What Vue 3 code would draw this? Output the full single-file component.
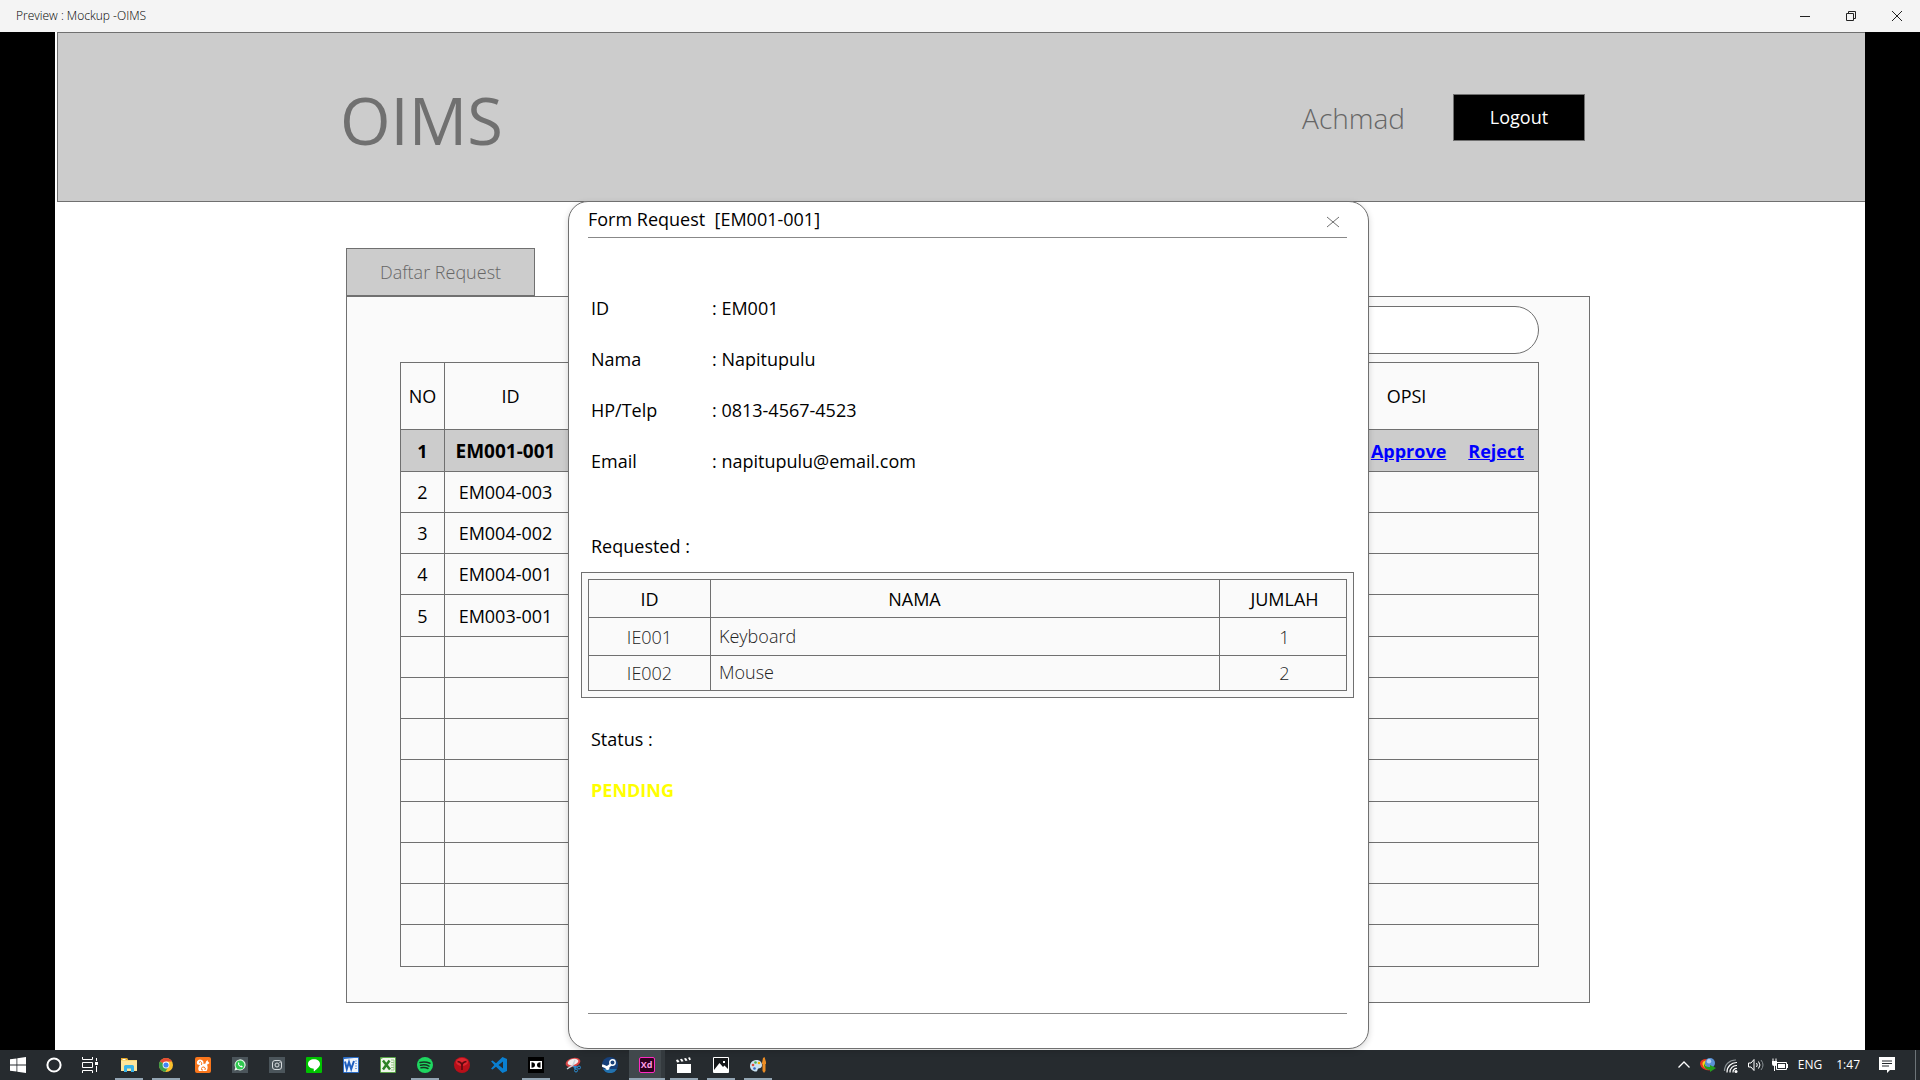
<script setup>
const fields = [
  { label: 'ID', value: 'EM001' },
  { label: 'Nama', value: 'Napitupulu' },
  { label: 'HP/Telp', value: '0813-4567-4523' },
  { label: 'Email', value: 'napitupulu@email.com' },
]

const items = [
  { id: 'IE001', name: 'Keyboard', qty: 1 },
  { id: 'IE002', name: 'Mouse', qty: 2 },
]

const ids = ['EM001-001', 'EM004-003', 'EM004-002', 'EM004-001', 'EM003-001']
const rows = Array.from({ length: 13 }, (_, i) => ({
  no: i < ids.length ? i + 1 : '',
  id: ids[i] || '',
  selected: i === 0,
}))
</script>

<template>
  <div class="window">
    <div class="titlebar">
      <span class="title">Preview : Mockup -OIMS</span>
      <div class="controls">
        <button type="button" aria-label="Minimize">
          <svg width="12" height="12" viewBox="0 0 12 12"><path d="M1 6.5h10" stroke="#222" fill="none" /></svg>
        </button>
        <button type="button" aria-label="Restore">
          <svg width="12" height="12" viewBox="0 0 12 12"><path d="M1.500 3.500h7v7h-7zM3.500 3.500v-2h7v7h-2" stroke="#222" fill="none" /></svg>
        </button>
        <button type="button" aria-label="Close">
          <svg width="12" height="12" viewBox="0 0 12 12"><path d="M1 1l10 10M11 1L1 11" stroke="#222" fill="none" /></svg>
        </button>
      </div>
    </div>

    <div class="stage">
      <div class="artboard">
        <header class="header">
          <h1 class="logo">OIMS</h1>
          <div class="account">
            <span class="user">Achmad</span>
            <button type="button" class="logout">Logout</button>
          </div>
        </header>

        <main class="content">
          <button type="button" class="tab">Daftar Request</button>
          <section class="panel">
            <input class="search" type="text" aria-label="Cari request" />
            <table class="requests">
              <colgroup>
                <col class="c-no" />
                <col class="c-id" />
                <col />
                <col class="c-opsi" />
              </colgroup>
              <thead>
                <tr><th>NO</th><th>ID</th><th></th><th>OPSI</th></tr>
              </thead>
              <tbody>
                <tr v-for="(row, i) in rows" :key="i" :class="{ selected: row.selected }">
                  <td>{{ row.no }}</td>
                  <td class="id">{{ row.id }}</td>
                  <td></td>
                  <td class="actions">
                    <template v-if="row.selected">
                      <a href="#">Approve</a>
                      <a href="#">Reject</a>
                    </template>
                  </td>
                </tr>
              </tbody>
            </table>
          </section>
        </main>

        <div class="modal" role="dialog" aria-labelledby="modal-title">
          <div class="modal-head">
            <h2 id="modal-title">Form Request&nbsp; [EM001-001]</h2>
            <button type="button" class="close" aria-label="Close form">
              <svg width="14" height="12" viewBox="0 0 14 12"><path d="M1 1l12 10M13 1L1 11" stroke="#707070" fill="none" /></svg>
            </button>
          </div>
          <dl class="fields">
            <div v-for="f in fields" :key="f.label" class="field">
              <dt>{{ f.label }}</dt>
              <dd>: {{ f.value }}</dd>
            </div>
          </dl>
          <p class="label">Requested :</p>
          <div class="items-box">
            <table class="items">
              <colgroup>
                <col class="i-id" />
                <col />
                <col class="i-qty" />
              </colgroup>
              <thead>
                <tr><th>ID</th><th class="name-head">NAMA</th><th class="qty">JUMLAH</th></tr>
              </thead>
              <tbody>
                <tr v-for="it in items" :key="it.id">
                  <td>{{ it.id }}</td>
                  <td class="name">{{ it.name }}</td>
                  <td class="qty">{{ it.qty }}</td>
                </tr>
              </tbody>
            </table>
          </div>
          <p class="label status-label">Status :</p>
          <p class="label status">PENDING</p>
          <div class="modal-foot"></div>
        </div>
      </div>
    </div>

    <footer class="taskbar">
      <div class="system">
        <button type="button" aria-label="Start">
          <svg width="16" height="16" viewBox="0 0 16 16" fill="#fff"><path d="M0 2.300L6.500 1.400v6.200H0zM7.300 1.300L16 0v7.600H7.300zM0 8.400h6.500v6.200L0 13.700zM7.300 8.400H16V16l-8.700-1.300z" /></svg>
        </button>
        <button type="button" aria-label="Cortana">
          <svg width="16" height="16" viewBox="0 0 16 16"><circle cx="8" cy="8" r="6.600" fill="none" stroke="#fff" stroke-width="2" /></svg>
        </button>
        <button type="button" aria-label="Task view">
          <svg width="16" height="16" viewBox="0 0 16 16" fill="none" stroke="#fff"><path d="M.5 0v2.500h10V0M.5 5.500h10v5H.5zM.5 16v-2.500h10V16M14.500 1v3M14.500 9v6" /><path d="M13 5h3v3h-3z" fill="#fff" stroke="none" /></svg>
        </button>
      </div>
      <div class="apps">
        <button type="button" class="open" aria-label="File Explorer">
          <svg width="16" height="16" viewBox="0 0 16 16"><path d="M0 1h6l1 2h9v11H0z" fill="#f8d775" /><path d="M0 1h6l1 2H0z" fill="#e5a92a" /><path d="M1.500 2h3v1h-3z" fill="#fff" /><path d="M0 4h16v10H0z" fill="#ffe59a" /><path d="M3 15V9.500Q3 8 4.500 8h7Q13 8 13 9.500V15h-3v-3.500H6V15z" fill="#39b3e8" /></svg>
        </button>
        <button type="button" class="open" aria-label="Chrome">
          <svg width="16" height="16" viewBox="0 0 16 16"><circle cx="8" cy="8" r="7" fill="#fbc02d" /><path d="M8 8L1.900 4.500A7 7 0 0 1 14.100 4.500H8z" fill="#e64a35" /><path d="M8 8L1.900 4.500A7 7 0 0 0 7.300 15L10.500 9.500z" fill="#3b9e4b" /><circle cx="8" cy="8" r="3.400" fill="#fff" /><circle cx="8" cy="8" r="2.600" fill="#4285f4" /></svg>
        </button>
        <button type="button" aria-label="UC Browser">
          <svg width="16" height="16" viewBox="0 0 16 16"><rect width="16" height="16" rx="2" fill="#f9761c" /><path d="M4 14q-2-3 1-6Q1 8 2 4.500 3.500 1.500 7 3q2 1 1.500 4l2-.5Q10.500 4 12.500 3l.3 1.200L14.500 6l-1.500 1.200-1 .3Q13.500 11 11.500 14z" fill="#fff" /><path d="M4 5.500q1.500-2 2.500 0T6 8M10 13q1-2.500-1-3t-2.500 1.500T8 13" fill="none" stroke="#f9761c" /></svg>
        </button>
        <button type="button" aria-label="WhatsApp">
          <svg width="16" height="16" viewBox="0 0 16 16"><path d="M0 0h16v16H0z" fill="#4b555b" /><path d="M2.500 13.500l.8-3a5.500 5.500 0 1 1 2.200 2.200z" fill="#e8fbec" /><circle cx="8" cy="8" r="4.500" fill="#2fc84f" /><path d="M6 5.500q-.5 4 4 5l.8-1.200-1.600-.8-.7.5L7 7.500l.4-.8L7 5.400z" fill="#fff" /></svg>
        </button>
        <button type="button" aria-label="Instagram">
          <svg width="16" height="16" viewBox="0 0 16 16"><path d="M0 0h16v16H0z" fill="#4b555b" /><rect x="3.500" y="3.500" width="9" height="9" rx="2.500" fill="none" stroke="#d8dcde" /><circle cx="8" cy="8" r="2" fill="none" stroke="#d8dcde" /><path d="M10.500 5h1v1h-1z" fill="#d8dcde" /></svg>
        </button>
        <button type="button" aria-label="LINE">
          <svg width="16" height="16" viewBox="0 0 16 16"><rect width="16" height="16" rx="1" fill="#00c300" /><path d="M8 2.300c3.400 0 6 2 6 4.700 0 2.800-3 4.700-5.600 7.200-.6.500-.8-.2-.6-2.500C4.700 11.700 2 9.700 2 7s2.600-4.700 6-4.700z" fill="#fff" /></svg>
        </button>
        <button type="button" aria-label="Word">
          <svg width="16" height="16" viewBox="0 0 16 16"><rect width="16" height="16" rx="1" fill="#2b6cc4" /><path d="M1 2l10-1h4v14H1z" fill="#eef4fc" /><path d="M12 4h2M12 6.500h2M12 9h2M12 11.500h2" stroke="#7ba2dc" /><path d="M2 4.500l1.800 7.500L6 5l2.200 7L11 4" fill="none" stroke="#1f5fc0" stroke-width="2" /></svg>
        </button>
        <button type="button" aria-label="Excel">
          <svg width="16" height="16" viewBox="0 0 16 16"><rect width="16" height="16" rx="1" fill="#58a446" /><path d="M1 2l2-1h12v14H1z" fill="#eff8ea" /><path d="M11 3h3v10h-3M11 5.500h3M11 8h3M11 10.500h3" fill="none" stroke="#9bc98a" /><path d="M3 3.500l7 9M9.500 3.500L3 12.500" stroke="#2e8426" stroke-width="2.500" /></svg>
        </button>
        <button type="button" class="open" aria-label="Spotify">
          <svg width="16" height="16" viewBox="0 0 16 16"><circle cx="8" cy="8" r="8" fill="#1ed760" /><path d="M3 5.500q5-1.500 10 .8M3.500 8.300q4.500-1.200 8.500.8M4 10.800q4-1 7 .7" fill="none" stroke="#173522" stroke-width="1.500" stroke-linecap="round" /></svg>
        </button>
        <button type="button" aria-label="Yandex">
          <svg width="16" height="16" viewBox="0 0 16 16"><circle cx="8" cy="8" r="8" fill="#b80f19" /><ellipse cx="8" cy="5" rx="6" ry="4" fill="#dd2730" /><path d="M3.500 4.500Q8 5 8 9q0-4 4.500-4.500M8 7v6" fill="none" stroke="#5b0a10" stroke-width="1.600" /></svg>
        </button>
        <button type="button" aria-label="Visual Studio Code">
          <svg width="16" height="16" viewBox="0 0 16 16"><path d="M11.500 0L16 2v12l-4.500 2L5 9.800 1.500 12.500 0 11.700 3.300 8 0 4.300l1.500-.8L5 6.200zM12 4.500L7.500 8l4.500 3.500z" fill="#0a7fd0" fill-rule="evenodd" /></svg>
        </button>
        <button type="button" class="open" aria-label="Dolby">
          <svg width="16" height="16" viewBox="0 0 16 16"><path d="M0 0h16v16H0z" fill="#000" /><path d="M2 4h12v8H2z" fill="#fff" /><path d="M3.500 5.200q3.500 0 3.500 2.800t-3.500 2.800zM12.500 5.200q-3.500 0-3.500 2.800t3.500 2.800z" fill="#000" /></svg>
        </button>
        <button type="button" aria-label="Snipping Tool">
          <svg width="16" height="16" viewBox="0 0 16 16"><ellipse cx="8" cy="5.500" rx="7.500" ry="4.500" fill="#d94545" transform="rotate(-15 8 5.500)" /><ellipse cx="8" cy="5" rx="5.500" ry="3" fill="#f2efef" transform="rotate(-15 8 5)" /><path d="M2 12l6-4 2-5" fill="none" stroke="#ccd3d8" stroke-width="1.500" /><circle cx="14" cy="10.500" r="1.500" fill="none" stroke="#2d8fd5" /><circle cx="11" cy="13.500" r="1.500" fill="none" stroke="#2d8fd5" /><path d="M8 9.500l4.500.5M10 9v3" stroke="#2d8fd5" stroke-width="1.500" /></svg>
        </button>
        <button type="button" aria-label="Steam">
          <svg width="16" height="16" viewBox="0 0 16 16"><circle cx="8" cy="8" r="8" fill="#17407a" /><path d="M1 12A8 8 0 0 0 15 12z" fill="#2372ae" /><circle cx="10.500" cy="5.500" r="2.700" fill="none" stroke="#fff" stroke-width="1.400" /><path d="M0 8.500l5 2 4-3" fill="none" stroke="#fff" stroke-width="2.500" /><circle cx="5.500" cy="11" r="2" fill="#fff" /></svg>
        </button>
        <button type="button" class="open active" aria-label="Adobe XD">
          <span class="xd">Xd</span>
        </button>
        <button type="button" class="open" aria-label="Movies">
          <svg width="16" height="16" viewBox="0 0 16 16" fill="#fff"><path d="M1 7h14v9H1z" /><path d="M0 3l2-.5 1.500 2.500-2.500.5zM4 2.200l2-.4L7.500 4.300l-2 .4zM8 1.400l2-.4 1.500 2.500-2 .4zM12 .7l2-.5.800 2.600-1.500.4z" /></svg>
        </button>
        <button type="button" class="open" aria-label="Photos">
          <svg width="16" height="16" viewBox="0 0 16 16"><path d="M.5.5h15v15H.5z" fill="#15181a" stroke="#fff" /><path d="M1 13l5.500-7 3.500 4 1.500-1.500L15 12v3H1z" fill="#fff" /><path d="M10 4h2v2h-2z" fill="#fff" /></svg>
        </button>
        <button type="button" class="open" aria-label="Paint">
          <svg width="16" height="16" viewBox="0 0 16 16"><path d="M6 3C2 3.500 0 6 0 9s2.500 5.500 6 5.500c2 0 1-2.500 2.500-3S12 11 12 8 9.500 2.600 6 3z" fill="#c9e1f2" /><circle cx="3" cy="8" r="1.300" fill="#e04a3a" /><circle cx="5.500" cy="5.500" r="1.300" fill="#4caf50" /><circle cx="9" cy="6" r="1.300" fill="#f4b400" /><circle cx="4.500" cy="11.500" r="1.300" fill="#3267c8" /><path d="M12 6l1-5 1.500-1L16 5v2h-4zM12.500 7h3v7l-1.500 2-1.500-2z" fill="#ec8d25" /></svg>
        </button>
      </div>
      <div class="tray">
        <svg width="24" height="16" viewBox="0 0 24 16"><path d="M6.500 10.500L12 5l5.500 5.500" fill="none" stroke="#fff" stroke-width="1.300" /></svg>
        <svg width="24" height="16" viewBox="0 0 24 16"><path d="M11 2Q4 2 4 7q1 6 10 6.500L9 7z" fill="#e8361f" /><path d="M10 3.500Q6 4 6.500 7.500 8 12 14 12.500L9 7z" fill="#f7d11d" /><circle cx="14" cy="6" r="5" fill="#5a92d6" /><circle cx="13" cy="4.300" r="2.200" fill="#b5d2f4" /><path d="M8 6q1 4.500 6 4V8l6 3-6 4v-2Q7 12.500 8 6z" fill="#25a01d" /></svg>
        <svg width="24" height="16" viewBox="0 0 24 16"><g fill="none" stroke="#fff" stroke-width="1.200"><path d="M7 15.500A9.500 9.500 0 0 1 17 5.500M10 15.500a6.500 6.500 0 0 1 7-7M13 15.500a3.500 3.500 0 0 1 4-4" /><path d="M4.500 14A11 11 0 0 1 16 3" stroke="#899094" /></g><circle cx="16" cy="14.500" r="1.500" fill="#fff" /></svg>
        <svg width="24" height="16" viewBox="0 0 24 16"><g fill="none" stroke="#fff"><path d="M4.500 6h2.500l3-3.500v11L7 10H4.500zM12.500 6q1.500 2 0 4M14.500 4.500q3 3.500 0 7" /><path d="M17 3q4 5 0 10" stroke="#899094" /></g></svg>
        <svg width="24" height="16" viewBox="0 0 24 16"><path d="M8.500 5.500h10v7h-10z" fill="none" stroke="#fff" /><path d="M10 7h7v4h-7zM19 7h1v4h-1zM4 4h5v3q0 2-2 2v5H6V9Q4 9 4 7zM4.500 1.500h1V4h-1zM7.500 1.500h1V4h-1z" fill="#fff" /></svg>
        <span class="lang">ENG</span>
        <time class="clock">1:47</time>
        <svg class="notes" width="16" height="16" viewBox="0 0 16 16"><path d="M0 0h16v13h-5l-3 3v-3H0z" fill="#fff" /><path d="M3 4h10M3 6.500h10M3 9h7" stroke="#24292d" /></svg>
      </div>
    </footer>
  </div>
</template>

<style>
body {
  margin: 0;
  background: #000;
}
</style>

<style scoped>
.window {
  display: flex;
  flex-direction: column;
  min-height: 100vh;
  font-family: "Open Sans", "Noto Sans", sans-serif;
  font-size: 18px;
  line-height: 24px;
  font-weight: 400;
  color: #000;
}
.window *,
.window {
  box-sizing: border-box;
}
button {
  font: inherit;
  color: inherit;
  padding: 0;
  border: 0;
  background: none;
}
h1,
h2,
p,
dl,
dd {
  margin: 0;
  font-weight: inherit;
}

/* Window title bar */
.titlebar {
  display: flex;
  justify-content: space-between;
  align-items: center;
  height: 32px;
  padding-left: 16px;
  background: #f4f4f4;
  font-size: 12px;
  font-weight: 350;
  color: #000;
}
.controls {
  display: flex;
  height: 100%;
}
.controls button {
  display: flex;
  align-items: center;
  justify-content: center;
  width: 46px;
}

/* Artboard */
.stage {
  display: flex;
  flex: 1;
  padding: 0 55px;
  background: #000;
}
.artboard {
  position: relative;
  flex: 1;
  background: #fff;
}
.header {
  display: flex;
  justify-content: space-between;
  align-items: center;
  height: 170px;
  margin-left: 2px;
  padding: 0 280px 0 282px;
  border: 1px solid #707070;
  border-right: 0;
  background: #ccc;
}
.logo {
  padding-top: 6px;
  font-size: 65px;
  line-height: 80px;
  color: #707070;
}
.account {
  display: flex;
  align-items: center;
  gap: 48px;
}
.user {
  padding-top: 2px;
  font-size: 28px;
  line-height: 36px;
  font-weight: 350;
  color: #666;
}
.logout {
  width: 132px;
  height: 47px;
  border: 1px solid #707070;
  background: #000;
  color: #fff;
}
.content {
  padding: 46px 275px 0 291px;
}
.tab {
  display: block;
  width: 189px;
  height: 48px;
  border: 1px solid #707070;
  background: #ccc;
  font-weight: 350;
  color: #666;
}
.panel {
  padding: 9px 50px 35px 53px;
  border: 1px solid #707070;
  background: #fafafa;
}
.search {
  display: block;
  width: 70%;
  height: 48px;
  margin: 0 0 8px auto;
  padding: 0 24px;
  border: 1px solid #707070;
  border-radius: 24px;
  background: #fff;
  font: inherit;
}
table {
  width: 100%;
  border-collapse: collapse;
  table-layout: fixed;
}
th,
td {
  padding: 0;
  border: 1px solid #707070;
  font-weight: inherit;
  text-align: center;
}
.requests th {
  height: 67px;
}
.requests td {
  height: 41px;
}
.requests tr:nth-child(4n + 1) td {
  height: 42px;
}
.c-no {
  width: 44px;
}
.c-id {
  width: 132px;
}
.c-opsi {
  width: 264px;
}
.requests .id {
  padding-right: 10px;
}
.requests .actions {
  padding-right: 14px;
  text-align: right;
}
.selected td {
  background: #ccc;
  font-weight: 700;
}
.selected .id {
  font-size: 19px;
}
.actions a {
  margin-left: 22px;
  color: #00f;
}

/* Request form */
.modal {
  position: absolute;
  top: 169px;
  right: 496px;
  bottom: 1px;
  left: 513px;
  display: flex;
  flex-direction: column;
  padding: 0 12px 34px;
  border: 1px solid #707070;
  border-radius: 20px;
  background: #fff;
  box-shadow: 0 2px 6px rgba(0, 0, 0, 0.16);
}
.modal-head {
  display: flex;
  justify-content: space-between;
  align-items: center;
  height: 36px;
  margin: 0 9px 0 7px;
  border-bottom: 1px solid #888;
}
.modal-head h2 {
  padding-bottom: 2px;
  font-size: 18px;
  line-height: 24px;
}
.close {
  display: flex;
  margin: 4px 7px 0 0;
}
.fields {
  padding: 44px 10px 0;
}
.field {
  display: flex;
  align-items: center;
  height: 51px;
}
.field dt {
  width: 121px;
}
.label {
  margin: 48px 0 0 10px;
}
.items-box {
  margin: 14px 2px 0 0;
  padding: 6px;
  border: 1px solid #707070;
  background: #fafafa;
}
.items th,
.items td {
  height: 38px;
}
.items tr:last-child td {
  height: 35px;
}
.i-id {
  width: 122px;
}
.i-qty {
  width: 127px;
}
.items td {
  font-weight: 350;
  color: #222;
}
.items .name-head {
  padding-right: 101px;
}
.items .name {
  padding: 0 0 2px 8px;
  text-align: left;
}
.items .qty {
  padding-left: 3px;
}
.status-label {
  margin-top: 29px;
}
.status {
  margin-top: 27px;
  font-weight: 700;
  color: #ff0;
}
.modal-foot {
  margin: auto 9px 0 7px;
  border-top: 1px solid #888;
}

/* Taskbar */
.taskbar {
  display: flex;
  height: 30px;
  background: #262b2f;
  color: #fff;
}
.system,
.apps,
.tray {
  display: flex;
  align-items: center;
}
.system button,
.apps button {
  display: flex;
  align-items: center;
  justify-content: center;
  width: 36px;
  height: 30px;
}
.apps {
  margin-left: 2px;
}
.apps button {
  position: relative;
  width: 37px;
}
.apps .open::after {
  content: "";
  position: absolute;
  bottom: 0;
  left: 5px;
  width: 28px;
  height: 2px;
  background: #93a5b3;
}
.apps .active {
  background: linear-gradient(90deg, transparent 1px, #41484c 1px, #41484c 33px, #343a3e 33px);
}
.apps .active::after {
  left: 1px;
  width: 36px;
}
.xd {
  width: 16px;
  height: 16px;
  border: 1px solid #ff2bc2;
  border-radius: 2px;
  background: #2e001e;
  color: #ff9be5;
  font-size: 9px;
  font-weight: 700;
  line-height: 13px;
}
.tray {
  margin-left: auto;
  padding-right: 4px;
  border-right: 1px solid #6d7478;
  margin-right: 4px;
  font-size: 12px;
}
.lang {
  margin-left: 6px;
}
.clock {
  margin-left: 14px;
}
.notes {
  margin: 0 16px 0 19px;
}
</style>
